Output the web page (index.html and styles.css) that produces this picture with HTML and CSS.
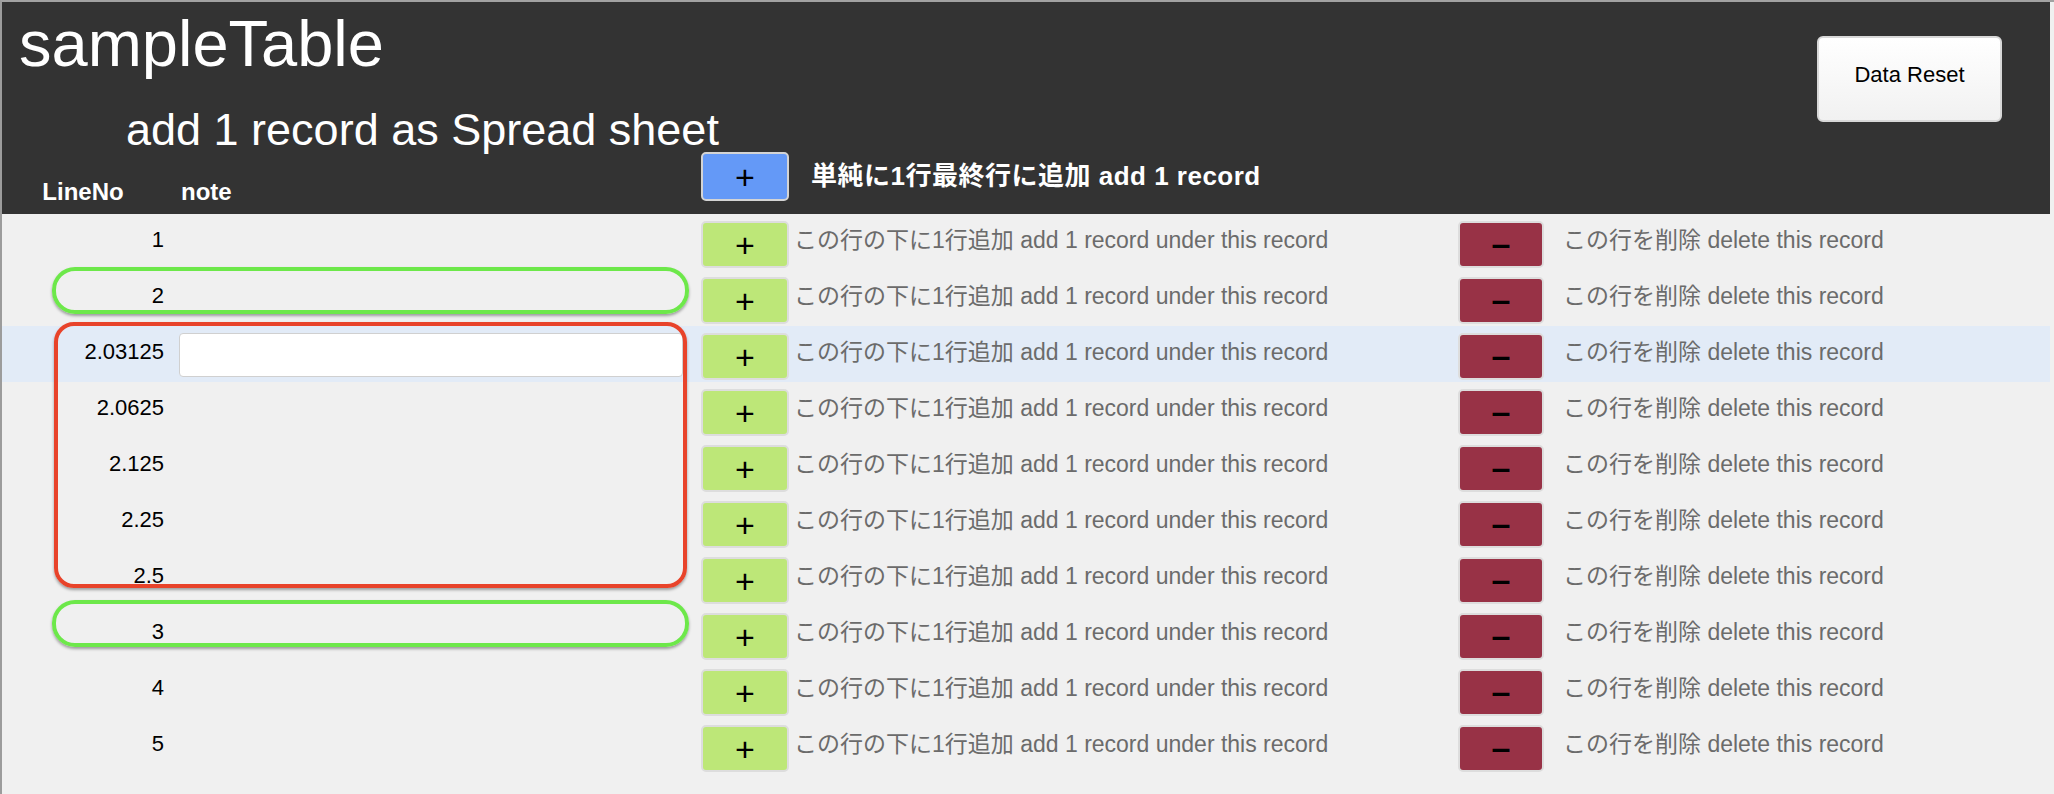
FILE: index.html
```html
<!DOCTYPE html>
<html lang="ja">
<head>
<meta charset="utf-8">
<title>sampleTable</title>
<link rel="stylesheet" href="styles.css">
</head>
<body>
<div class="frame">
  <div class="sheet">
    <header class="top">
      <div class="top-head">
        <div class="titles">
          <h1 class="title">sampleTable</h1>
          <h2 class="subtitle">add 1 record as Spread sheet</h2>
        </div>
        <button class="reset-btn" type="button">Data Reset</button>
      </div>
      <div class="grid-row thead">
        <div class="th th-num">LineNo</div>
        <div class="th th-note">note</div>
        <div class="cell-btn"><button class="btn btn-blue" type="button">+</button></div>
        <div class="th th-add">単純に1行最終行に追加 add 1 record</div>
      </div>
    </header>

    <div class="rows">
      <div class="grid-row data">
        <div class="num">1</div><div class="note"></div>
        <div class="cell-btn"><button class="btn btn-green" type="button">+</button></div>
        <div class="txt">この行の下に1行追加 add 1 record under this record</div>
        <div class="cell-btn"><button class="btn btn-red" type="button">–</button></div>
        <div class="txt">この行を削除 delete this record</div>
      </div>
      <div class="grid-row data">
        <div class="num">2</div><div class="note"></div>
        <div class="cell-btn"><button class="btn btn-green" type="button">+</button></div>
        <div class="txt">この行の下に1行追加 add 1 record under this record</div>
        <div class="cell-btn"><button class="btn btn-red" type="button">–</button></div>
        <div class="txt">この行を削除 delete this record</div>
      </div>
      <div class="grid-row data is-active">
        <div class="num">2.03125</div><div class="note"><input class="note-input" type="text"></div>
        <div class="cell-btn"><button class="btn btn-green" type="button">+</button></div>
        <div class="txt">この行の下に1行追加 add 1 record under this record</div>
        <div class="cell-btn"><button class="btn btn-red" type="button">–</button></div>
        <div class="txt">この行を削除 delete this record</div>
      </div>
      <div class="grid-row data">
        <div class="num">2.0625</div><div class="note"></div>
        <div class="cell-btn"><button class="btn btn-green" type="button">+</button></div>
        <div class="txt">この行の下に1行追加 add 1 record under this record</div>
        <div class="cell-btn"><button class="btn btn-red" type="button">–</button></div>
        <div class="txt">この行を削除 delete this record</div>
      </div>
      <div class="grid-row data">
        <div class="num">2.125</div><div class="note"></div>
        <div class="cell-btn"><button class="btn btn-green" type="button">+</button></div>
        <div class="txt">この行の下に1行追加 add 1 record under this record</div>
        <div class="cell-btn"><button class="btn btn-red" type="button">–</button></div>
        <div class="txt">この行を削除 delete this record</div>
      </div>
      <div class="grid-row data">
        <div class="num">2.25</div><div class="note"></div>
        <div class="cell-btn"><button class="btn btn-green" type="button">+</button></div>
        <div class="txt">この行の下に1行追加 add 1 record under this record</div>
        <div class="cell-btn"><button class="btn btn-red" type="button">–</button></div>
        <div class="txt">この行を削除 delete this record</div>
      </div>
      <div class="grid-row data">
        <div class="num">2.5</div><div class="note"></div>
        <div class="cell-btn"><button class="btn btn-green" type="button">+</button></div>
        <div class="txt">この行の下に1行追加 add 1 record under this record</div>
        <div class="cell-btn"><button class="btn btn-red" type="button">–</button></div>
        <div class="txt">この行を削除 delete this record</div>
      </div>
      <div class="grid-row data">
        <div class="num">3</div><div class="note"></div>
        <div class="cell-btn"><button class="btn btn-green" type="button">+</button></div>
        <div class="txt">この行の下に1行追加 add 1 record under this record</div>
        <div class="cell-btn"><button class="btn btn-red" type="button">–</button></div>
        <div class="txt">この行を削除 delete this record</div>
      </div>
      <div class="grid-row data">
        <div class="num">4</div><div class="note"></div>
        <div class="cell-btn"><button class="btn btn-green" type="button">+</button></div>
        <div class="txt">この行の下に1行追加 add 1 record under this record</div>
        <div class="cell-btn"><button class="btn btn-red" type="button">–</button></div>
        <div class="txt">この行を削除 delete this record</div>
      </div>
      <div class="grid-row data">
        <div class="num">5</div><div class="note"></div>
        <div class="cell-btn"><button class="btn btn-green" type="button">+</button></div>
        <div class="txt">この行の下に1行追加 add 1 record under this record</div>
        <div class="cell-btn"><button class="btn btn-red" type="button">–</button></div>
        <div class="txt">この行を削除 delete this record</div>
      </div>
    </div>

    <div class="mark mark-green mark-a"></div>
    <div class="mark mark-red mark-b"></div>
    <div class="mark mark-green mark-c"></div>
  </div>
</div>
</body>
</html>
```

FILE: styles.css
```css
* { box-sizing: border-box; }

html, body {
  margin: 0;
  padding: 0;
  height: 100%;
  overflow: hidden;
  background: #f0f0f0;
}

body {
  font-family: "Liberation Sans", "Noto Sans CJK JP", sans-serif;
  color: #000;
}

.frame {
  height: 100%;
  border-top: 2px solid #a2a2a2;
  border-left: 2px solid #9c9c9c;
  padding-right: 4px;
  background: #f0f0f0;
}

.sheet {
  position: relative;
}

/* ---------- dark header ---------- */
.top {
  background: #333333;
  color: #fff;
  padding-top: 9px;
}

.top-head {
  display: flex;
  justify-content: space-between;
  align-items: flex-start;
}

.title {
  margin: 0 0 0 17px;
  font-size: 65px;
  line-height: 65px;
  font-weight: normal;
}

.subtitle {
  margin: 32px 0 0 124px;
  font-size: 45px;
  line-height: 44px;
  font-weight: normal;
}

.reset-btn {
  margin: 25px 48px 0 0;
  width: 185px;
  height: 86px;
  padding: 0 0 9px 0;
  border: 2px solid #d8d8d8;
  border-radius: 6px;
  background: linear-gradient(#ffffff, #f1f1f1);
  font-family: "Liberation Sans", sans-serif;
  font-size: 22px;
  color: #000;
}

/* ---------- shared grid ---------- */
.grid-row {
  display: grid;
  grid-template-columns: 162px 537px 93px 664px 105px 1fr;
}

.thead {
  height: 62px;
}

.th {
  font-weight: bold;
  font-size: 24px;
  line-height: 24px;
  color: #fff;
}

.th-num {
  align-self: end;
  margin-bottom: 10px;
  text-align: center;
}

.th-note {
  align-self: end;
  margin-bottom: 10px;
  padding-left: 17px;
}

.th-add {
  grid-column: 4 / 7;
  margin-left: 17px;
  font-size: 26px;
  line-height: 49px;
  letter-spacing: 0.5px;
  white-space: nowrap;
}

/* ---------- buttons ---------- */
.btn {
  display: block;
  margin: 0;
  padding: 0;
  font-family: "Liberation Sans", sans-serif;
  font-size: 34px;
  line-height: 1;
  color: #000;
  border-radius: 5px;
}

.btn-blue {
  width: 88px;
  height: 49px;
  background: #6499f7;
  border: 2px solid #d4d4d4;
}

.btn-green {
  width: 88px;
  height: 47px;
  background: #bde778;
  border: 2px solid #dddddd;
}

.btn-red {
  width: 86px;
  height: 47px;
  padding-bottom: 4px;
  background: #983246;
  border: 2px solid #dddddd;
  font-weight: bold;
}

/* ---------- data rows ---------- */
.data {
  height: 56px;
  padding-top: 7px;
  align-items: start;
}

.data.is-active {
  background: #e2ebf7;
}

.num {
  font-size: 22px;
  line-height: 38px;
  text-align: right;
  color: #000;
}

.note {
  padding-left: 15px;
  padding-right: 18px;
}

.note-input {
  display: block;
  width: 504px;
  height: 44px;
  margin: 0;
  border: 1px solid #d0d0d0;
  border-radius: 4px;
  background: #fff;
}

.txt {
  font-size: 23px;
  line-height: 38px;
  color: #6b6b6b;
  white-space: nowrap;
}

/* ---------- annotation marks ---------- */
.mark {
  position: absolute;
  border-width: 4px;
  border-style: solid;
  box-shadow: 0 2px 3px rgba(0, 0, 0, 0.35);
  pointer-events: none;
}

.mark-green {
  border-color: #6de84a;
  border-radius: 23px;
}

.mark-red {
  border-color: #e8432a;
  border-radius: 20px;
}

.mark-a { left: 50px; top: 265px; width: 637px; height: 47px; }
.mark-b { left: 52px; top: 320px; width: 633px; height: 266px; }
.mark-c { left: 50px; top: 598px; width: 637px; height: 47px; }
```
